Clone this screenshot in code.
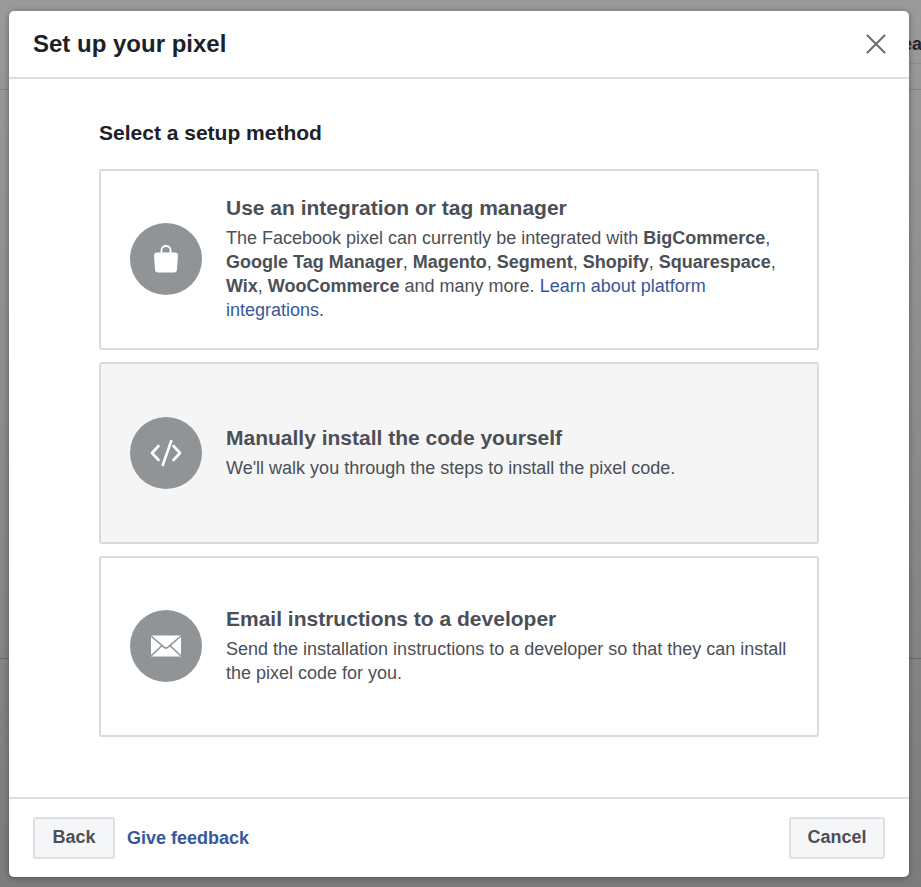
<div class="page">
  <div class="behind">
    <div class="behind-tab">ea</div>
    <div class="behind-line btn-edge"></div>
    <div class="behind-line top"></div>
    <div class="behind-line bottom"></div>
  </div>

  <div class="modal">
    <header class="head">
      <h1>Set up your pixel</h1>
      <button class="close" aria-label="Close">
        <svg width="20" height="20" viewBox="0 0 20 20"><path d="M1.5 1.5 L18.5 18.5 M18.5 1.5 L1.5 18.5" stroke="#686d76" stroke-width="2" stroke-linecap="round" fill="none"/></svg>
      </button>
    </header>

    <main class="body">
      <h2>Select a setup method</h2>
      <div class="cards">
        <div class="card first">
          <div class="icon">
            <svg width="28" height="28" viewBox="0 0 28 28">
              <path d="M9.5 10 V5 a4.5 4 0 0 1 9 0 V10" stroke="#fff" stroke-width="1.8" fill="none"/>
              <path d="M2 10.5 Q2 7.6 5 7.6 H23 Q26 7.6 26 10.5 L25 24.6 Q24.8 27.6 22 27.6 H6 Q3.2 27.6 3 24.6 Z" fill="#fff"/>
            </svg>
          </div>
          <div class="text">
            <h3>Use an integration or tag manager</h3>
            <p>The Facebook pixel can currently be integrated with <b>BigCommerce</b>, <b>Google Tag Manager</b>, <b>Magento</b>, <b>Segment</b>, <b>Shopify</b>, <b>Squarespace</b>, <b>Wix</b>, <b>WooCommerce</b> and many more. <a href="#a">Learn about platform integrations</a>.</p>
          </div>
        </div>

        <div class="card hover">
          <div class="icon">
            <svg width="32" height="28" viewBox="0 0 32 28">
              <path d="M8.5 7 L2 14 L8.5 21 M23.5 7 L30 14 L23.5 21 M21.2 2 L12.8 26" stroke="#fff" stroke-width="2.6" stroke-linecap="round" stroke-linejoin="round" fill="none"/>
            </svg>
          </div>
          <div class="text">
            <h3>Manually install the code yourself</h3>
            <p>We'll walk you through the steps to install the pixel code.</p>
          </div>
        </div>

        <div class="card">
          <div class="icon">
            <svg width="32" height="24" viewBox="0 0 32 24">
              <rect x="1" y="1.5" width="30" height="21" fill="#fff"/>
              <path d="M1 2 L14.6 13.6 Q16 14.8 17.4 13.6 L31 2 M1 22 L11.6 12 M31 22 L20.4 12" stroke="#909497" stroke-width="1.6" fill="none"/>
            </svg>
          </div>
          <div class="text">
            <h3>Email instructions to a developer</h3>
            <p>Send the installation instructions to a developer so that they can install the pixel code for you.</p>
          </div>
        </div>
      </div>
    </main>

    <footer class="foot">
      <button class="btn back">Back</button>
      <a class="feedback" href="#f">Give feedback</a>
      <button class="btn cancel">Cancel</button>
    </footer>
  </div>
</div>

<style>
  :global(body) { margin: 0; }
  .page {
    position: relative;
    width: 921px;
    height: 887px;
    overflow: hidden;
    background: linear-gradient(#9a9a9a, #7c7c7c);
    font-family: "Liberation Sans", Arial, sans-serif;
    box-sizing: border-box;
    padding: 11px 12px 9px 9px;
  }
  .behind { position: absolute; inset: 0; }
  .behind-tab {
    position: absolute; left: 902px; top: 34px;
    font-size: 18px; font-weight: 700; color: #22262c;
  }
  .behind-line { position: absolute; left: 0; right: 0; height: 1px; background: #7f7f7f; }
  .behind-line.btn-edge { top: 63px; left: 880px; background: #8a8a8a; }
  .behind-line.top { top: 89px; }
  .behind-line.bottom { top: 658px; background: #6a6a6a; }

  .modal {
    position: relative;
    height: 866px;
    background: #fff;
    border-radius: 5px;
    box-shadow: 0 1px 6px rgba(0,0,0,.35);
    display: flex;
    flex-direction: column;
  }
  .head {
    height: 66px;
    flex: none;
    border-bottom: 2px solid #dddfe2;
    display: flex;
    align-items: center;
    justify-content: space-between;
    padding: 0 23px 0 24px;
  }
  h1 { margin: 0; font-size: 24px; font-weight: 700; color: #1d2129; }
  .close { background: none; border: 0; padding: 0; width: 20px; height: 20px; display: flex; }

  .body { flex: 1; padding: 42px 90px 0; }
  h2 { margin: 0 0 24px; font-size: 21px; line-height: 24px; font-weight: 700; color: #1d2129; }
  .cards { display: flex; flex-direction: column; gap: 12px; }
  .card {
    height: 181px;
    box-sizing: border-box;
    border: 2px solid #dadada;
    border-radius: 3px;
    display: flex;
    align-items: center;
    padding: 0 29px;
    background: #fff;
    gap: 24px;
  }
  .card.hover { background: #f5f5f5; height: 182px; }
  .card:not(.hover) .text { margin-bottom: 2px; }
  .icon {
    width: 72px; height: 72px; flex: none;
    border-radius: 50%;
    background: #909497;
    display: flex; align-items: center; justify-content: center;
    margin-bottom: 1px;
  }
  .first .icon { margin-bottom: 2px; }
  .text { color: #4b4f56; }
  h3 { margin: 0 0 6px; font-size: 21px; line-height: 24px; font-weight: 700; color: #4b4f56; }
  p { margin: 0; font-size: 18px; line-height: 24px; }
  p b { font-weight: 700; }
  a { color: #365899; text-decoration: none; }

  .foot {
    height: 78px;
    flex: none;
    border-top: 2px solid #dddfe2;
    display: flex;
    align-items: center;
    padding: 0 24px;
  }
  .btn {
    height: 42px;
    box-sizing: border-box;
    border: 2px solid #dddfe2;
    border-radius: 3px;
    background: #f5f6f7;
    color: #4b4f56;
    font: 700 18px "Liberation Sans", Arial, sans-serif;
    padding: 0 0 2px;
  }
  .back { width: 82px; }
  .cancel { width: 96px; margin-left: auto; }
  .feedback { margin-left: 12px; font-size: 18px; font-weight: 700; }
</style>
